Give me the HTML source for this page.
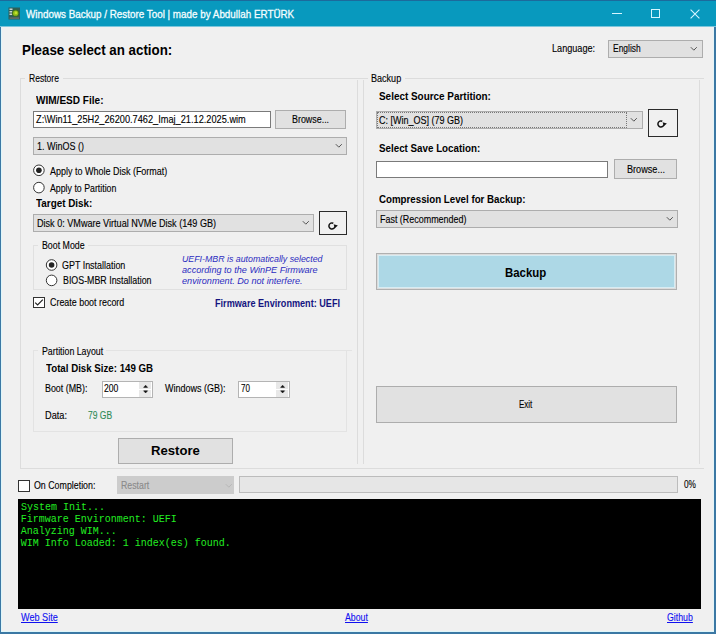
<!DOCTYPE html>
<html><head><meta charset="utf-8">
<style>
*{margin:0;padding:0;box-sizing:border-box}
html,body{width:716px;height:634px;overflow:hidden;background:#f0f0f0}
body{position:relative;font-family:"Liberation Sans",sans-serif;font-size:10px;color:#000}
.a{position:absolute}
.t{position:absolute;white-space:nowrap;line-height:1;transform-origin:0 0;-webkit-text-stroke:0.12px currentColor}
.u{text-decoration:underline}
.grp{position:absolute;border:1px solid #dcdcdc}
.tb{position:absolute;background:#fff;border:1px solid #7a7a7a}
.cb{position:absolute;background:#e1e1e1;border:1px solid #adadad}
.btn{position:absolute;background:#e1e1e1;border:1px solid #adadad}
.ln{position:absolute;background:#dcdcdc}
svg{position:absolute;overflow:visible}
</style></head><body>
<!-- title bar -->
<div class="a" style="left:0;top:0;width:716px;height:26px;background:#0899be"></div><div class="a" style="left:0;top:26px;width:716px;height:1px;background:#7cc6dc"></div>
<div class="a" style="left:0;top:0;width:716px;height:1px;background:#1c6a9c"></div>
<div class="a" style="left:0;top:27px;width:1px;height:607px;background:#3b78a4"></div>
<div class="a" style="left:714px;top:27px;width:2px;height:607px;background:#3b78a4"></div>
<div class="a" style="left:0;top:632px;width:716px;height:2px;background:#3b78a4"></div>
<div class="a" style="left:1px;top:27px;width:1px;height:605px;background:#def6fa"></div>
<div class="a" style="left:713px;top:27px;width:1px;height:605px;background:#e4f4f8"></div>
<div class="a" style="left:1px;top:631px;width:713px;height:1px;background:#def6fa"></div>
<!-- icon -->
<svg style="left:0;top:0" width="30" height="27">
 <rect x="8.5" y="7.5" width="11.5" height="12" fill="#2c5e5a"/>
 <rect x="9.5" y="8.5" width="3" height="1.5" fill="#c9d2cf"/>
 <rect x="9.5" y="11" width="3" height="1.5" fill="#c9d2cf"/>
 <rect x="9.5" y="13.5" width="3" height="1.5" fill="#c9d2cf"/>
 <circle cx="15.6" cy="13.2" r="3.6" fill="#3f6e1e"/>
 <circle cx="15.6" cy="13.2" r="2.6" fill="#8fbf1a"/>
 <circle cx="15.9" cy="12.9" r="1.3" fill="#c4e02c"/>
 <rect x="9.5" y="17.2" width="9.5" height="1.8" fill="#5d6a66"/>
</svg>
<!-- caption buttons -->
<div class="a" style="left:612px;top:13px;width:10px;height:1px;background:#d6f5ff"></div>
<div class="a" style="left:651px;top:9px;width:9px;height:9px;border:1px solid #d6f5ff"></div>
<svg style="left:690px;top:9px" width="10" height="10" viewBox="0 0 10 10"><path d="M0.6 0.6L9.4 9.4M9.4 0.6L0.6 9.4" stroke="#d6f5ff" stroke-width="1.1"/></svg>

<!-- header: language combo -->
<div class="cb" style="left:608px;top:40px;width:95px;height:18px"></div>
<svg style="left:690px;top:46px" width="8" height="6"><path d="M0.8 1.2L3.8 4.2L6.8 1.2" fill="none" stroke="#555" stroke-width="1"/></svg>

<!-- Restore group -->
<div class="ln" style="left:20px;top:78px;width:684px;height:1px"></div>
<div class="ln" style="left:20px;top:79px;width:1px;height:390px"></div>
<div class="ln" style="left:357px;top:80px;width:1px;height:384px"></div>
<div class="ln" style="left:363px;top:80px;width:1px;height:384px"></div>
<div class="ln" style="left:699px;top:80px;width:1px;height:384px"></div>
<div class="ln" style="left:21px;top:468px;width:683px;height:1px"></div>
<div class="a" style="left:25px;top:72px;width:38px;height:12px;background:#f0f0f0"></div>

<div class="tb" style="left:33px;top:111px;width:238px;height:17px"></div>
<div class="btn" style="left:275px;top:110px;width:71px;height:19px"></div>
<div class="cb" style="left:33px;top:137px;width:314px;height:18px"></div>
<svg style="left:335px;top:143px" width="8" height="6"><path d="M0.8 1.2L3.8 4.2L6.8 1.2" fill="none" stroke="#555" stroke-width="1"/></svg>

<!-- radios -->
<svg style="left:33px;top:164px" width="13" height="13"><circle cx="5.9" cy="6.3" r="5.3" fill="#fff" stroke="#333" stroke-width="1"/><circle cx="5.9" cy="6.3" r="2.8" fill="#222"/></svg>
<svg style="left:33px;top:181px" width="13" height="13"><circle cx="5.9" cy="6.6" r="5.3" fill="#fff" stroke="#333" stroke-width="1"/></svg>

<div class="cb" style="left:33px;top:214px;width:281px;height:18px"></div>
<svg style="left:302px;top:220px" width="8" height="6"><path d="M0.8 1.2L3.8 4.2L6.8 1.2" fill="none" stroke="#555" stroke-width="1"/></svg>
<div class="a" style="left:319px;top:211px;width:28px;height:24px;border:1px solid #2a2a2a;background:#f0f0f0"></div>
<svg style="left:326px;top:220px" width="14" height="12"><path d="M7.3 3.2 A3.05 3.05 0 1 0 9.0 6.3" fill="none" stroke="#111" stroke-width="1.5"/><path d="M7.6 4.3 L11.9 5.4 L8.9 7.9 Z" fill="#111"/></svg>

<!-- boot mode group -->
<div class="grp" style="border-color:#e0e0e0;left:33px;top:245px;width:314px;height:45px"></div>
<div class="a" style="left:38px;top:239px;width:50px;height:12px;background:#f0f0f0"></div>
<svg style="left:46px;top:259px" width="13" height="13"><circle cx="5.6" cy="6" r="5.3" fill="#fff" stroke="#333" stroke-width="1"/><circle cx="5.6" cy="6" r="2.8" fill="#222"/></svg>
<svg style="left:46px;top:274px" width="13" height="13"><circle cx="5.6" cy="6.4" r="5.3" fill="#fff" stroke="#333" stroke-width="1"/></svg>

<!-- checkbox -->
<div class="a" style="left:33px;top:297px;width:12px;height:11px;border:1px solid #333;background:#fff"></div>
<svg style="left:33px;top:297px" width="12" height="11"><path d="M2.2 5.6L4.6 8L9.8 2.6" fill="none" stroke="#222" stroke-width="1.2"/></svg>

<!-- partition layout group -->
<div class="grp" style="border-color:#e3e3e3;left:33px;top:350px;width:314px;height:82px"></div>
<div class="ln" style="background:#e3e3e3;left:346px;top:350px;width:6px;height:1px"></div>
<div class="a" style="left:38px;top:344px;width:68px;height:12px;background:#f0f0f0"></div>
<!-- numeric 1 -->
<div class="a" style="left:102px;top:381px;width:51px;height:17px;border:1px solid #b4b4b4;background:#fff"></div>
<div class="a" style="left:139px;top:382px;width:12px;height:15px;background:#e8e8e8"></div>
<div class="a" style="left:139px;top:389px;width:12px;height:1px;background:#fff"></div>
<svg style="left:139px;top:382px" width="12" height="15"><path d="M4.6 5.4L6.6 3.2L8.6 5.4Z M4.6 8.8L6.6 11L8.6 8.8Z" fill="#111" stroke="#111" stroke-width="0.5"/></svg>
<!-- numeric 2 -->
<div class="a" style="left:238px;top:381px;width:52px;height:17px;border:1px solid #b4b4b4;background:#fff"></div>
<div class="a" style="left:276px;top:382px;width:12px;height:15px;background:#e8e8e8"></div>
<div class="a" style="left:276px;top:389px;width:12px;height:1px;background:#fff"></div>
<svg style="left:276px;top:382px" width="12" height="15"><path d="M4.6 5.4L6.6 3.2L8.6 5.4Z M4.6 8.8L6.6 11L8.6 8.8Z" fill="#111" stroke="#111" stroke-width="0.5"/></svg>

<div class="btn" style="left:118px;top:438px;width:115px;height:26px"></div>

<!-- Backup group -->
<div class="a" style="left:368px;top:72px;width:37px;height:12px;background:#f0f0f0"></div>

<div class="cb" style="left:376px;top:111px;width:267px;height:18px"></div>
<div class="a" style="left:377px;top:112px;width:250px;height:16px;border:1px dotted #777"></div>
<svg style="left:630px;top:117px" width="8" height="6"><path d="M0.8 1.2L3.8 4.2L6.8 1.2" fill="none" stroke="#555" stroke-width="1"/></svg>
<div class="a" style="left:648px;top:109px;width:30px;height:28px;border:1px solid #2a2a2a;background:#f0f0f0"></div>
<svg style="left:655px;top:118px" width="14" height="12"><path d="M7.3 3.2 A3.05 3.05 0 1 0 9.0 6.3" fill="none" stroke="#111" stroke-width="1.5"/><path d="M7.6 4.3 L11.9 5.4 L8.9 7.9 Z" fill="#111"/></svg>

<div class="tb" style="left:376px;top:161px;width:232px;height:17px"></div>
<div class="btn" style="left:614px;top:159px;width:63px;height:20px"></div>
<div class="cb" style="left:376px;top:210px;width:302px;height:18px"></div>
<svg style="left:666px;top:216px" width="8" height="6"><path d="M0.8 1.2L3.8 4.2L6.8 1.2" fill="none" stroke="#555" stroke-width="1"/></svg>
<div class="a" style="left:376px;top:253px;width:301px;height:37px;background:#add8e6;border:1px solid #b0b0b0;box-shadow:inset 0 0 0 1px #dcdcdc,inset 0 0 0 2px #d6ecf3"></div>
<div class="btn" style="left:376px;top:386px;width:301px;height:37px"></div>

<!-- bottom -->
<div class="a" style="left:18px;top:480px;width:12px;height:12px;border:1px solid #333;background:#fff"></div>
<div class="a" style="left:117px;top:476px;width:117px;height:18px;background:#cccccc"></div>
<svg style="left:225px;top:483px" width="8" height="6"><path d="M0.8 1.2L3.8 4.2L6.8 1.2" fill="none" stroke="#b8b8b8" stroke-width="1"/></svg>
<div class="a" style="left:239px;top:476px;width:439px;height:17px;background:#e6e6e6;border:1px solid #bcbcbc"></div>

<div class="a" style="left:18px;top:499px;width:683px;height:110px;background:#000"></div>
<div class="t" id="t0" style='left:25.80px;top:8.90px;font-size:10.5px;font-weight:normal;font-style:normal;color:#f4fdff;font-family:"Liberation Sans", sans-serif;-webkit-text-stroke:0.3px currentColor;transform:scaleX(0.9378)'>Windows Backup / Restore Tool | made by Abdullah ERTÜRK</div>
<div class="t" id="t1" style='left:22.10px;top:42.70px;font-size:14px;font-weight:bold;font-style:normal;color:#000;font-family:"Liberation Sans", sans-serif;-webkit-text-stroke:0;transform:scaleX(0.9510)'>Please select an action:</div>
<div class="t" id="t2" style='left:551.70px;top:42.70px;font-size:10.5px;font-weight:normal;font-style:normal;color:#000;font-family:"Liberation Sans", sans-serif;transform:scaleX(0.8683)'>Language:</div>
<div class="t" id="t3" style='left:612.50px;top:43.00px;font-size:10.5px;font-weight:normal;font-style:normal;color:#000;font-family:"Liberation Sans", sans-serif;transform:scaleX(0.8035)'>English</div>
<div class="t" id="t4" style='left:28.90px;top:72.80px;font-size:10.5px;font-weight:normal;font-style:normal;color:#000;font-family:"Liberation Sans", sans-serif;transform:scaleX(0.8151)'>Restore</div>
<div class="t" id="t5" style='left:36.40px;top:95.20px;font-size:10.5px;font-weight:bold;font-style:normal;color:#000;font-family:"Liberation Sans", sans-serif;-webkit-text-stroke:0;transform:scaleX(0.9560)'>WIM/ESD File:</div>
<div class="t" id="t6" style='left:36.40px;top:114.20px;font-size:10.5px;font-weight:normal;font-style:normal;color:#000;font-family:"Liberation Sans", sans-serif;transform:scaleX(0.8772)'>Z:\Win11_25H2_26200.7462_Imaj_21.12.2025.wim</div>
<div class="t" id="t7" style='left:291.80px;top:113.90px;font-size:10.5px;font-weight:normal;font-style:normal;color:#000;font-family:"Liberation Sans", sans-serif;transform:scaleX(0.8472)'>Browse...</div>
<div class="t" id="t8" style='left:37.30px;top:141.00px;font-size:10.5px;font-weight:normal;font-style:normal;color:#000;font-family:"Liberation Sans", sans-serif;transform:scaleX(0.8557)'>1. WinOS ()</div>
<div class="t" id="t9" style='left:49.90px;top:165.50px;font-size:10.5px;font-weight:normal;font-style:normal;color:#000;font-family:"Liberation Sans", sans-serif;transform:scaleX(0.8557)'>Apply to Whole Disk (Format)</div>
<div class="t" id="t10" style='left:50.00px;top:182.50px;font-size:10.5px;font-weight:normal;font-style:normal;color:#000;font-family:"Liberation Sans", sans-serif;transform:scaleX(0.8361)'>Apply to Partition</div>
<div class="t" id="t11" style='left:36.30px;top:197.90px;font-size:10.5px;font-weight:bold;font-style:normal;color:#000;font-family:"Liberation Sans", sans-serif;-webkit-text-stroke:0;transform:scaleX(0.9410)'>Target Disk:</div>
<div class="t" id="t12" style='left:37.00px;top:217.80px;font-size:10.5px;font-weight:normal;font-style:normal;color:#000;font-family:"Liberation Sans", sans-serif;transform:scaleX(0.8651)'>Disk 0: VMware Virtual NVMe Disk (149 GB)</div>
<div class="t" id="t13" style='left:41.80px;top:240.20px;font-size:10.5px;font-weight:normal;font-style:normal;color:#000;font-family:"Liberation Sans", sans-serif;transform:scaleX(0.8382)'>Boot Mode</div>
<div class="t" id="t14" style='left:62.30px;top:260.10px;font-size:10.5px;font-weight:normal;font-style:normal;color:#000;font-family:"Liberation Sans", sans-serif;transform:scaleX(0.8496)'>GPT Installation</div>
<div class="t" id="t15" style='left:62.70px;top:275.00px;font-size:10.5px;font-weight:normal;font-style:normal;color:#000;font-family:"Liberation Sans", sans-serif;transform:scaleX(0.8422)'>BIOS-MBR Installation</div>
<div class="t" id="t16" style='left:181.60px;top:254.30px;font-size:9.5px;font-weight:normal;font-style:italic;color:#2c2cc0;font-family:"Liberation Sans", sans-serif;-webkit-text-stroke:0;transform:scaleX(0.9269)'>UEFI-MBR is automatically selected</div>
<div class="t" id="t17" style='left:181.60px;top:265.40px;font-size:9.5px;font-weight:normal;font-style:italic;color:#2c2cc0;font-family:"Liberation Sans", sans-serif;-webkit-text-stroke:0;transform:scaleX(0.9594)'>according to the WinPE Firmware</div>
<div class="t" id="t18" style='left:181.60px;top:275.60px;font-size:9.5px;font-weight:normal;font-style:italic;color:#2c2cc0;font-family:"Liberation Sans", sans-serif;-webkit-text-stroke:0;transform:scaleX(0.9597)'>environment. Do not interfere.</div>
<div class="t" id="t19" style='left:49.50px;top:296.70px;font-size:10.5px;font-weight:normal;font-style:normal;color:#000;font-family:"Liberation Sans", sans-serif;transform:scaleX(0.8483)'>Create boot record</div>
<div class="t" id="t20" style='left:215.10px;top:297.60px;font-size:10.5px;font-weight:bold;font-style:normal;color:#141480;font-family:"Liberation Sans", sans-serif;-webkit-text-stroke:0;transform:scaleX(0.8676)'>Firmware Environment: UEFI</div>
<div class="t" id="t21" style='left:41.90px;top:345.50px;font-size:10.5px;font-weight:normal;font-style:normal;color:#000;font-family:"Liberation Sans", sans-serif;transform:scaleX(0.8378)'>Partition Layout</div>
<div class="t" id="t22" style='left:45.50px;top:362.80px;font-size:10.5px;font-weight:bold;font-style:normal;color:#000;font-family:"Liberation Sans", sans-serif;-webkit-text-stroke:0;transform:scaleX(0.9240)'>Total Disk Size: 149 GB</div>
<div class="t" id="t23" style='left:45.00px;top:383.40px;font-size:10.5px;font-weight:normal;font-style:normal;color:#000;font-family:"Liberation Sans", sans-serif;transform:scaleX(0.8465)'>Boot (MB):</div>
<div class="t" id="t24" style='left:104.00px;top:382.80px;font-size:10.5px;font-weight:normal;font-style:normal;color:#000;font-family:"Liberation Sans", sans-serif;transform:scaleX(0.8202)'>200</div>
<div class="t" id="t25" style='left:164.90px;top:383.20px;font-size:10.5px;font-weight:normal;font-style:normal;color:#000;font-family:"Liberation Sans", sans-serif;transform:scaleX(0.8554)'>Windows (GB):</div>
<div class="t" id="t26" style='left:241.20px;top:382.80px;font-size:10.5px;font-weight:normal;font-style:normal;color:#000;font-family:"Liberation Sans", sans-serif;transform:scaleX(0.7686)'>70</div>
<div class="t" id="t27" style='left:44.80px;top:409.90px;font-size:10.5px;font-weight:normal;font-style:normal;color:#000;font-family:"Liberation Sans", sans-serif;transform:scaleX(0.8768)'>Data:</div>
<div class="t" id="t28" style='left:88.10px;top:409.90px;font-size:10.5px;font-weight:normal;font-style:normal;color:#2e8b57;font-family:"Liberation Sans", sans-serif;transform:scaleX(0.8097)'>79 GB</div>
<div class="t" id="t29" style='left:150.90px;top:444.40px;font-size:13px;font-weight:bold;font-style:normal;color:#000;font-family:"Liberation Sans", sans-serif;-webkit-text-stroke:0;transform:scaleX(1.0088)'>Restore</div>
<div class="t" id="t30" style='left:370.90px;top:73.10px;font-size:10.5px;font-weight:normal;font-style:normal;color:#000;font-family:"Liberation Sans", sans-serif;transform:scaleX(0.8612)'>Backup</div>
<div class="t" id="t31" style='left:378.70px;top:91.30px;font-size:10.5px;font-weight:bold;font-style:normal;color:#000;font-family:"Liberation Sans", sans-serif;-webkit-text-stroke:0;transform:scaleX(0.9445)'>Select Source Partition:</div>
<div class="t" id="t32" style='left:378.70px;top:114.80px;font-size:10.5px;font-weight:normal;font-style:normal;color:#000;font-family:"Liberation Sans", sans-serif;transform:scaleX(0.8582)'>C: [Win_OS] (79 GB)</div>
<div class="t" id="t33" style='left:378.70px;top:142.60px;font-size:10.5px;font-weight:bold;font-style:normal;color:#000;font-family:"Liberation Sans", sans-serif;-webkit-text-stroke:0;transform:scaleX(0.9321)'>Select Save Location:</div>
<div class="t" id="t34" style='left:626.80px;top:163.90px;font-size:10.5px;font-weight:normal;font-style:normal;color:#000;font-family:"Liberation Sans", sans-serif;transform:scaleX(0.8682)'>Browse...</div>
<div class="t" id="t35" style='left:378.70px;top:194.00px;font-size:10.5px;font-weight:bold;font-style:normal;color:#000;font-family:"Liberation Sans", sans-serif;-webkit-text-stroke:0;transform:scaleX(0.9263)'>Compression Level for Backup:</div>
<div class="t" id="t36" style='left:379.70px;top:214.00px;font-size:10.5px;font-weight:normal;font-style:normal;color:#000;font-family:"Liberation Sans", sans-serif;transform:scaleX(0.8512)'>Fast (Recommended)</div>
<div class="t" id="t37" style='left:505.40px;top:266.60px;font-size:12px;font-weight:bold;font-style:normal;color:#000;font-family:"Liberation Sans", sans-serif;-webkit-text-stroke:0;transform:scaleX(0.9508)'>Backup</div>
<div class="t" id="t38" style='left:518.90px;top:399.10px;font-size:10.5px;font-weight:normal;font-style:normal;color:#000;font-family:"Liberation Sans", sans-serif;transform:scaleX(0.7620)'>Exit</div>
<div class="t" id="t39" style='left:34.00px;top:479.90px;font-size:10.5px;font-weight:normal;font-style:normal;color:#000;font-family:"Liberation Sans", sans-serif;transform:scaleX(0.8413)'>On Completion:</div>
<div class="t" id="t40" style='left:120.80px;top:479.60px;font-size:10.5px;font-weight:normal;font-style:normal;color:#8a8a8a;font-family:"Liberation Sans", sans-serif;transform:scaleX(0.8342)'>Restart</div>
<div class="t" id="t41" style='left:684.00px;top:478.50px;font-size:10.5px;font-weight:normal;font-style:normal;color:#000;font-family:"Liberation Sans", sans-serif;transform:scaleX(0.7884)'>0%</div>
<div class="t" id="t42" style='left:20.70px;top:503.40px;font-size:10px;font-weight:normal;font-style:normal;color:#22ee22;font-family:"Liberation Mono", monospace;-webkit-text-stroke:0;transform:scaleX(1.0011)'>System Init...</div>
<div class="t" id="t43" style='left:20.70px;top:515.10px;font-size:10px;font-weight:normal;font-style:normal;color:#22ee22;font-family:"Liberation Mono", monospace;-webkit-text-stroke:0'>Firmware Environment: UEFI</div>
<div class="t" id="t44" style='left:20.70px;top:526.90px;font-size:10px;font-weight:normal;font-style:normal;color:#22ee22;font-family:"Liberation Mono", monospace;-webkit-text-stroke:0'>Analyzing WIM...</div>
<div class="t" id="t45" style='left:20.70px;top:539.10px;font-size:10px;font-weight:normal;font-style:normal;color:#22ee22;font-family:"Liberation Mono", monospace;-webkit-text-stroke:0'>WIM Info Loaded: 1 index(es) found.</div>
<div class="t u" id="t46" style='left:20.70px;top:611.70px;font-size:10.5px;font-weight:normal;font-style:normal;color:#1010f0;font-family:"Liberation Sans", sans-serif;transform:scaleX(0.8668)'>Web Site</div>
<div class="t u" id="t47" style='left:345.10px;top:611.50px;font-size:10.5px;font-weight:normal;font-style:normal;color:#1010f0;font-family:"Liberation Sans", sans-serif;transform:scaleX(0.8357)'>About</div>
<div class="t u" id="t48" style='left:667.30px;top:611.50px;font-size:10.5px;font-weight:normal;font-style:normal;color:#1010f0;font-family:"Liberation Sans", sans-serif;transform:scaleX(0.8361)'>Github</div>
</body></html>
